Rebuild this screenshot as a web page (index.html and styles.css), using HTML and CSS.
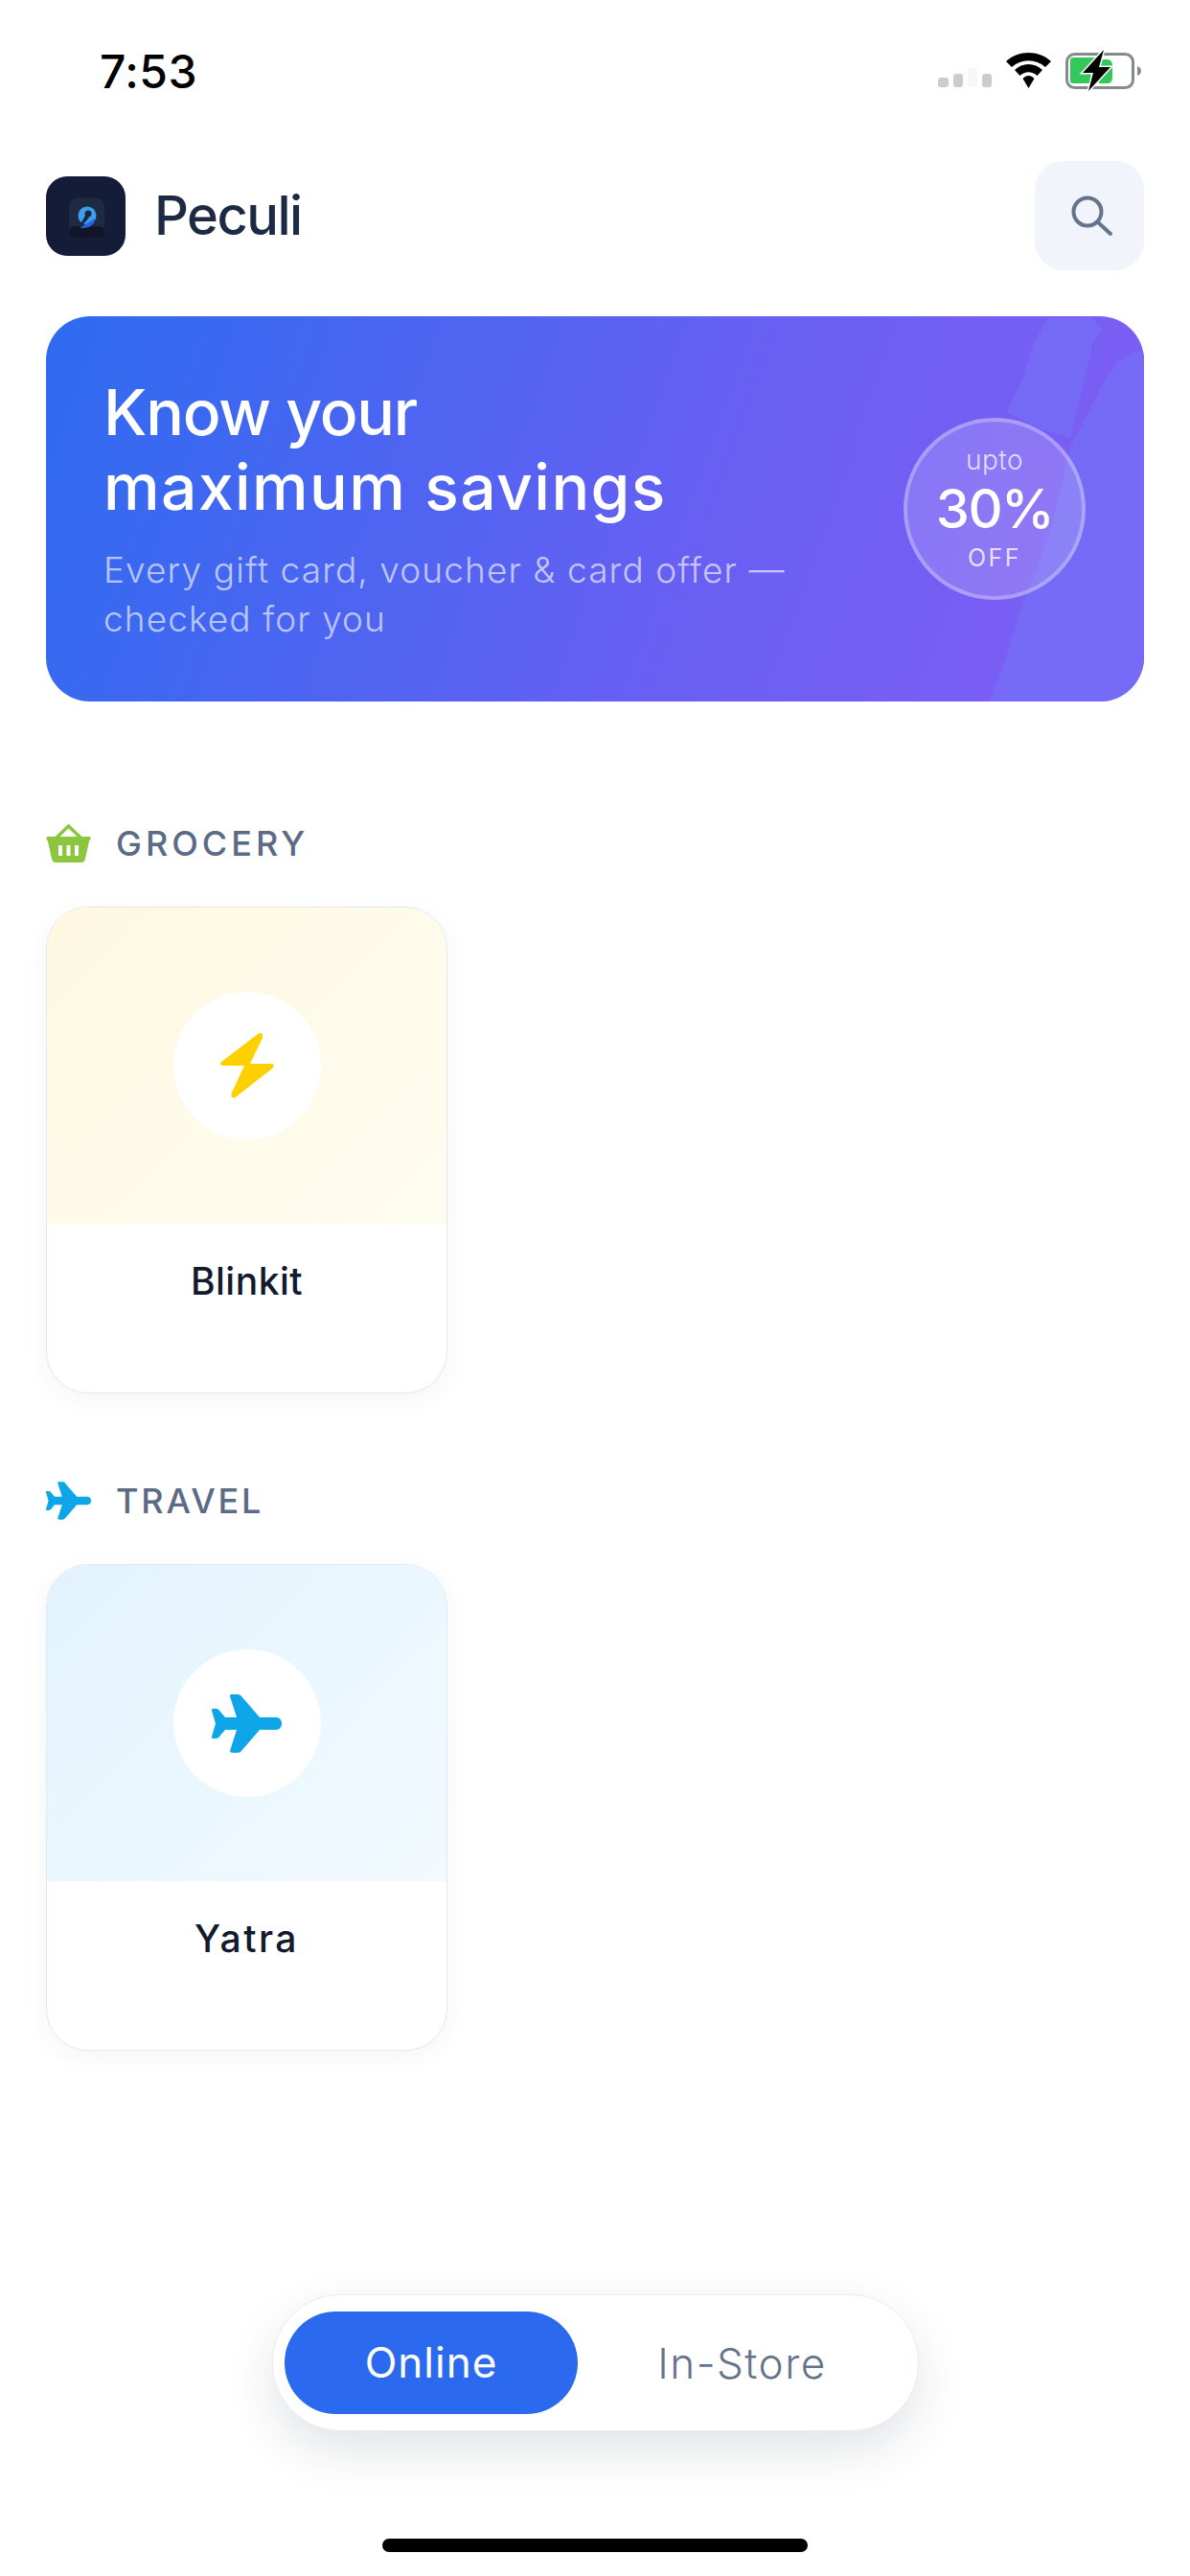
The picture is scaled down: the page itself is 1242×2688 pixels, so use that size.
FILE: index.html
```html
<!DOCTYPE html>
<html lang="en">
  <head>
    <meta charset="UTF-8" />
    <meta name="viewport" content="width=device-width, initial-scale=1.0" />
    <title>Peculi</title>
    <link rel="stylesheet" href="styles.css">
  </head>
  <body>
    <!-- Status bar -->
    <div class="status-bar">
      <span class="status-time">7:53</span>
      <svg class="status-icons" width="220" height="46" viewBox="0 0 220 46">
        <g fill="#c9cdce">
          <rect x="4" y="31" width="11" height="10" rx="3" />
          <rect x="20" y="27" width="10" height="14" rx="3" />
          <rect x="35" y="21" width="10" height="20" rx="3" fill="#f6f7f7" />
          <rect x="50" y="27" width="10" height="14" rx="3" />
        </g>
        <g fill="#000">
          <path d="M75 14 C88 2 109 2 122 14 L116 20 C106 11 91 11 81 20 Z" />
          <path d="M84 23 C92 15 105 15 113 23 L107.500 29 C102 24 95 24 89.500 29 Z" />
          <path d="M92.500 32 C96 28 101 28 104.500 32 L98.500 42 Z" />
        </g>
        <rect x="138.500" y="6.500" width="69" height="35" rx="8" fill="none" stroke="#858a8c" stroke-width="3" />
        <path d="M212 19 C215 20 216 22 216 24 C216 26 215 28 212 29 Z" fill="#858a8c" />
        <path d="M142 13 C142 11 143 10 145 10 H170 V37 H145 C143 37 142 36 142 34 Z M172 12 H181 C184 12 186 15 186 18 V30 C186 35 184 37 181 37 H172 Z" fill="#34c759" />
        <path d="M177 2 L155 26 H166 L161 45 L184 20 H172 Z" fill="#000" stroke="#fff" stroke-width="3" paint-order="stroke" />
      </svg>
    </div>

    <!-- Top header -->
    <header class="top-header">
      <div class="brand">
        <svg class="brand-logo" width="83" height="83" viewBox="0 0 83 83">
          <rect width="83" height="83" rx="22" fill="#141c38" />
          <rect x="24" y="22" width="37" height="42" rx="10" fill="#1e2a40" />
          <rect x="24" y="52" width="37" height="12" rx="6" fill="#111527" />
          <circle cx="43" cy="41" r="9.500" fill="#3aa0ee" />
          <circle cx="44" cy="39" r="3.500" fill="#1b2540" />
          <path d="M41 41 L36 50 L39 50 L45 43 Z" fill="#1b2540" />
          <path d="M35 54 L51 44 C52 49 46 55 35 54 Z" fill="#2a62e0" />
        </svg>
        <span class="brand-name">Peculi</span>
      </div>
      <button class="search-btn">
        <svg width="44" height="44" viewBox="0 0 44 44" fill="none" stroke="#64748b" stroke-width="4" stroke-linecap="round">
          <circle cx="17" cy="17" r="14.500" />
          <path d="M28 28 L41 40" />
        </svg>
      </button>
    </header>

    <!-- Savings banner -->
    <section class="banner">
      <svg class="banner-texture" width="1146" height="402" viewBox="0 0 1146 402">
        <defs>
          <pattern id="grain" width="3" height="3" patternUnits="userSpaceOnUse">
            <rect width="3" height="3" fill="#7a68f6" />
            <rect width="1.500" height="1.500" fill="#6670f5" />
          </pattern>
        </defs>
        <path d="M1045 2 L1092 2 L1102 13 L1092 30 L1083 70 L1069 127 L1040 118 L1002 100 L1018 68 L1030 30 Z" fill="url(#grain)" />
        <path d="M1135 37 L1146 37 L1146 402 L985 402 L1004 350 L1019 300 L1048 225 L1069 137 L1088 100 L1105 67 L1118 48 Z" fill="url(#grain)" />
      </svg>
      <div class="banner-text">
        <h1 class="banner-title"><span class="title-tight">Know your</span><br />maximum savings</h1>
        <p class="banner-sub">Every gift card, voucher &amp; card offer —<br />checked for you</p>
      </div>
      <div class="discount">
        <span class="discount-upto">upto</span>
        <span class="discount-value">30%</span>
        <span class="discount-off">OFF</span>
      </div>
    </section>

    <!-- Grocery -->
    <section class="category category-first">
      <h2 class="category-head">
        <svg class="category-icon" width="47" height="40" viewBox="0 0 47 40">
          <path d="M11 14 L23.500 2 L36 14" fill="none" stroke="#8cc63f" stroke-width="3.500" stroke-linecap="round" />
          <path fill-rule="evenodd" fill="#8cc63f" d="M2 13 H45 C46.500 13 47 14 46.500 15.500 L45 18 L41 36 C40.500 38.500 39 40 37 40 H10 C8 40 6.500 38.500 6 36 L2 18 L0.500 15.500 C0 14 0.500 13 2 13 Z M13 22 V33 H17 V22 Z M21.500 22 V33 H25.500 V22 Z M30 22 V33 H34 V22 Z" />
        </svg>
        <span>GROCERY</span>
      </h2>
      <div class="store-card">
        <div class="store-art store-art-yellow">
          <span class="store-circle">
            <svg width="58" height="70" viewBox="0 0 58 70">
              <path d="M40 2 L2 31 C0 33 1 35 4 35 H26 L13 63 C11 68 14 70 18 67 L55 38 C58 35 57 33 53 33 H32 L45 6 C46 1 43 0 40 2 Z" fill="#ffd000" />
            </svg>
          </span>
        </div>
        <div class="store-name">Blinkit</div>
      </div>
    </section>

    <!-- Travel -->
    <section class="category">
      <h2 class="category-head head-tight">
        <svg class="category-icon" width="47" height="40" viewBox="0 0 73 61">
          <path class="plane" d="M19 2 C19 0 20 0 22 0 H27 C29 0 30 1 31 2 L50 24 H67 C71 24 73 27 73 30.500 C73 34 71 37 67 37 H50 L31 59 C30 60 29 61 27 61 H22 C20 61 19 60 19 59 L26 37 H14 L8 44 C7 46 5 46 3 46 H1 C0 46 0 45 0 44 L4 30.500 L0 17 C0 16 0 15 1 15 H3 C5 15 7 15 8 17 L14 24 H26 Z" />
        </svg>
        <span>TRAVEL</span>
      </h2>
      <div class="store-card">
        <div class="store-art store-art-blue">
          <span class="store-circle">
            <svg width="73" height="61" viewBox="0 0 73 61">
              <path class="plane" d="M19 2 C19 0 20 0 22 0 H27 C29 0 30 1 31 2 L50 24 H67 C71 24 73 27 73 30.500 C73 34 71 37 67 37 H50 L31 59 C30 60 29 61 27 61 H22 C20 61 19 60 19 59 L26 37 H14 L8 44 C7 46 5 46 3 46 H1 C0 46 0 45 0 44 L4 30.500 L0 17 C0 16 0 15 1 15 H3 C5 15 7 15 8 17 L14 24 H26 Z" />
            </svg>
          </span>
        </div>
        <div class="store-name name-wide">Yatra</div>
      </div>
    </section>

    <!-- Floating switch -->
    <div class="mode-switch">
      <span class="mode mode-active">Online</span>
      <span class="mode">In-Store</span>
    </div>

    <div class="home-bar"></div>
  </body>
</html>
```

FILE: styles.css
```css
/* Base */
* {
  margin: 0;
  padding: 0;
  box-sizing: border-box;
}

body {
  position: relative;
  width: 1242px;
  height: 2688px;
  overflow: hidden;
  background-color: #fff;
  font-family: "Inter", "Liberation Sans", sans-serif;
  color: #111a2e;
}

/* Status bar */
.status-bar {
  height: 168px;
  padding: 50px 47px 0 104px;
  display: flex;
  justify-content: space-between;
  align-items: flex-start;
}

.status-time {
  font-size: 48px;
  line-height: 50px;
  font-weight: 500;
  color: #000;
  letter-spacing: 0.500px;
}

/* Header */
.top-header {
  height: 114px;
  padding: 0 48px;
  display: flex;
  justify-content: space-between;
  align-items: center;
}

.brand {
  display: flex;
  align-items: center;
  gap: 30px;
}

.brand-logo {
  display: block;
}

.brand-name {
  font-size: 56px;
  font-weight: 500;
  letter-spacing: -1.500px;
  color: #1c2a44;
}

.search-btn {
  width: 114px;
  height: 114px;
  border: none;
  border-radius: 30px;
  background-color: #f1f4fb;
  display: flex;
  justify-content: center;
  align-items: center;
  padding: 2px 0 0 6px;
}

/* Banner */
.banner {
  position: relative;
  height: 402px;
  margin: 48px 48px 0;
  padding: 0 61px 0 60px;
  border-radius: 46px;
  overflow: hidden;
  background: linear-gradient(110deg, #2d6bf0 0%, #6a5ff3 62%, #825df5 100%);
  display: flex;
  justify-content: space-between;
  align-items: center;
}

.banner-texture {
  position: absolute;
  top: 0;
  left: 0;
}

.banner-text {
  position: relative;
  color: #fff;
}

.banner-title {
  font-size: 66px;
  line-height: 78px;
  font-weight: 500;
  letter-spacing: 1.400px;
}

.title-tight {
  letter-spacing: -1.200px;
}

.banner-sub {
  margin-top: 22px;
  font-size: 37px;
  line-height: 51px;
  font-weight: 300;
  color: rgba(255, 255, 255, 0.65);
  letter-spacing: 1.100px;
}

.discount {
  position: relative;
  width: 190px;
  height: 190px;
  border-radius: 50%;
  border: 4px solid rgba(255, 255, 255, 0.28);
  background-color: rgba(255, 255, 255, 0.16);
  color: #fff;
  display: flex;
  flex-direction: column;
  align-items: center;
  justify-content: center;
}

.discount-upto {
  font-size: 28px;
  line-height: 36px;
  font-weight: 300;
  letter-spacing: 0.500px;
  color: rgba(255, 255, 255, 0.75);
}

.discount-value {
  font-size: 56px;
  line-height: 66px;
  font-weight: 500;
  letter-spacing: -1.500px;
}

.discount-off {
  font-size: 25px;
  line-height: 36px;
  font-weight: 400;
  letter-spacing: 2.500px;
  color: rgba(255, 255, 255, 0.8);
}

/* Categories */
.category {
  margin: 92px 48px 0;
}

.category-first {
  margin-top: 128px;
}

.category-head {
  height: 40px;
  display: flex;
  align-items: center;
  gap: 26px;
  font-size: 36px;
  font-weight: 500;
  letter-spacing: 4px;
  color: #5b6b85;
}

.head-tight {
  letter-spacing: 2.800px;
}

.category-icon {
  display: block;
  flex-shrink: 0;
}

.plane {
  fill: #0ea5e9;
}

.store-card {
  width: 419px;
  height: 508px;
  margin-top: 46px;
  border: 1px solid #e4e8f1;
  border-radius: 44px;
  overflow: hidden;
  background-color: #fff;
  box-shadow: 0 6px 24px rgba(30, 50, 90, 0.05);
}

.store-art {
  height: 330px;
  display: flex;
  justify-content: center;
  align-items: center;
}

.store-art-yellow {
  background: linear-gradient(135deg, #fef8e1, #fffdf0);
}

.store-art-blue {
  background: linear-gradient(135deg, #e2f3fd, #f2faff);
}

.store-circle {
  width: 154px;
  height: 154px;
  border-radius: 50%;
  background-color: #fff;
  display: flex;
  justify-content: center;
  align-items: center;
}

.store-name {
  margin-top: 36px;
  text-align: center;
  font-size: 39px;
  line-height: 48px;
  font-weight: 500;
  letter-spacing: 0.500px;
}

.name-wide {
  letter-spacing: 2.500px;
}

/* Floating switch */
.mode-switch {
  position: absolute;
  left: 284px;
  top: 2394px;
  width: 675px;
  height: 143px;
  padding: 0 12px;
  border: 1px solid #e8ecf4;
  border-radius: 72px;
  background-color: #fff;
  box-shadow: 0 20px 50px rgba(20, 30, 50, 0.12);
  display: flex;
  align-items: center;
}

.mode {
  flex: 1;
  text-align: center;
  font-size: 44px;
  font-weight: 300;
  letter-spacing: 1.500px;
  color: #64748b;
}

.mode-active {
  flex: 0 0 306px;
  height: 107px;
  border-radius: 54px;
  background-color: #2b6aee;
  color: #fff;
  font-weight: 400;
  letter-spacing: 1px;
  line-height: 107px;
}

.home-bar {
  position: absolute;
  left: 399px;
  top: 2649px;
  width: 444px;
  height: 14px;
  border-radius: 7px;
  background-color: #000;
}
```
